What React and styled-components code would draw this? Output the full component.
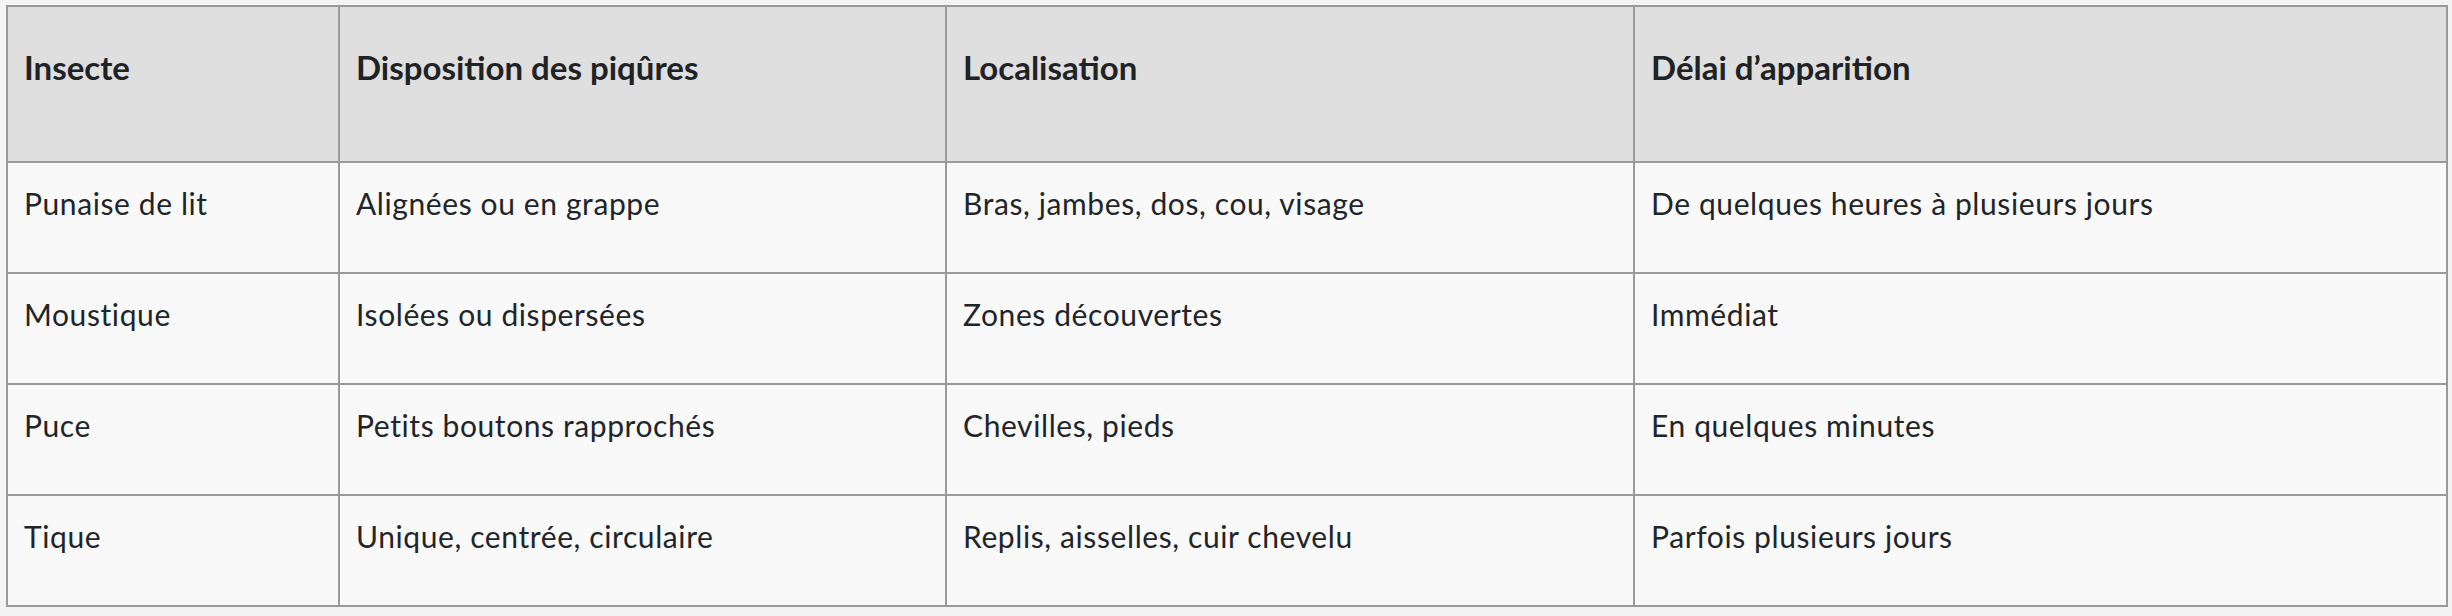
import React from "react";
import styled, { createGlobalStyle } from "styled-components";

const Global = createGlobalStyle`
  html, body { margin: 0; padding: 0; background: #f4f4f4; }
  body { font-family: "Lato", "Noto Sans", sans-serif; color: #212529; }
`;

const Wrap = styled.div`
  padding: 5px 6px 0 6px;
`;

const Table = styled.table`
  width: 2440px;
  border-collapse: collapse;
  table-layout: fixed;
  border: 2px solid #9a9a9a;
`;

const HeadCell = styled.th`
  background: #dfdfdf;
  border: 2px solid #9a9a9a;
  text-align: left;
  vertical-align: top;
  font-weight: 700;
  font-size: 33px;
  line-height: 44px;
  padding: 38px 16px 72px 16px;
  color: #1f2326;
`;

const Cell = styled.td`
  background: #f9f9f9;
  border: 2px solid #9a9a9a;
  vertical-align: top;
  font-weight: 400;
  font-size: 30px;
  letter-spacing: 0.6px;
  line-height: 40px;
  padding: 20px 16px 49px 16px;
  color: #212529;
`;

const widths = [332, 607, 688, 813];
const headers = ["Insecte", "Disposition des piqûres", "Localisation", "Délai d’apparition"];
const rows = [
  ["Punaise de lit", "Alignées ou en grappe", "Bras, jambes, dos, cou, visage", "De quelques heures à plusieurs jours"],
  ["Moustique", "Isolées ou dispersées", "Zones découvertes", "Immédiat"],
  ["Puce", "Petits boutons rapprochés", "Chevilles, pieds", "En quelques minutes"],
  ["Tique", "Unique, centrée, circulaire", "Replis, aisselles, cuir chevelu", "Parfois plusieurs jours"],
];

export default function App() {
  return (
    <>
      <Global />
      <Wrap>
        <Table>
          <colgroup>
            {widths.map((w, i) => (
              <col key={i} style={{ width: w }} />
            ))}
          </colgroup>
          <thead>
            <tr>
              {headers.map((h) => (
                <HeadCell key={h}>{h}</HeadCell>
              ))}
            </tr>
          </thead>
          <tbody>
            {rows.map((r) => (
              <tr key={r[0]}>
                {r.map((c) => (
                  <Cell key={c}>{c}</Cell>
                ))}
              </tr>
            ))}
          </tbody>
        </Table>
      </Wrap>
    </>
  );
}
